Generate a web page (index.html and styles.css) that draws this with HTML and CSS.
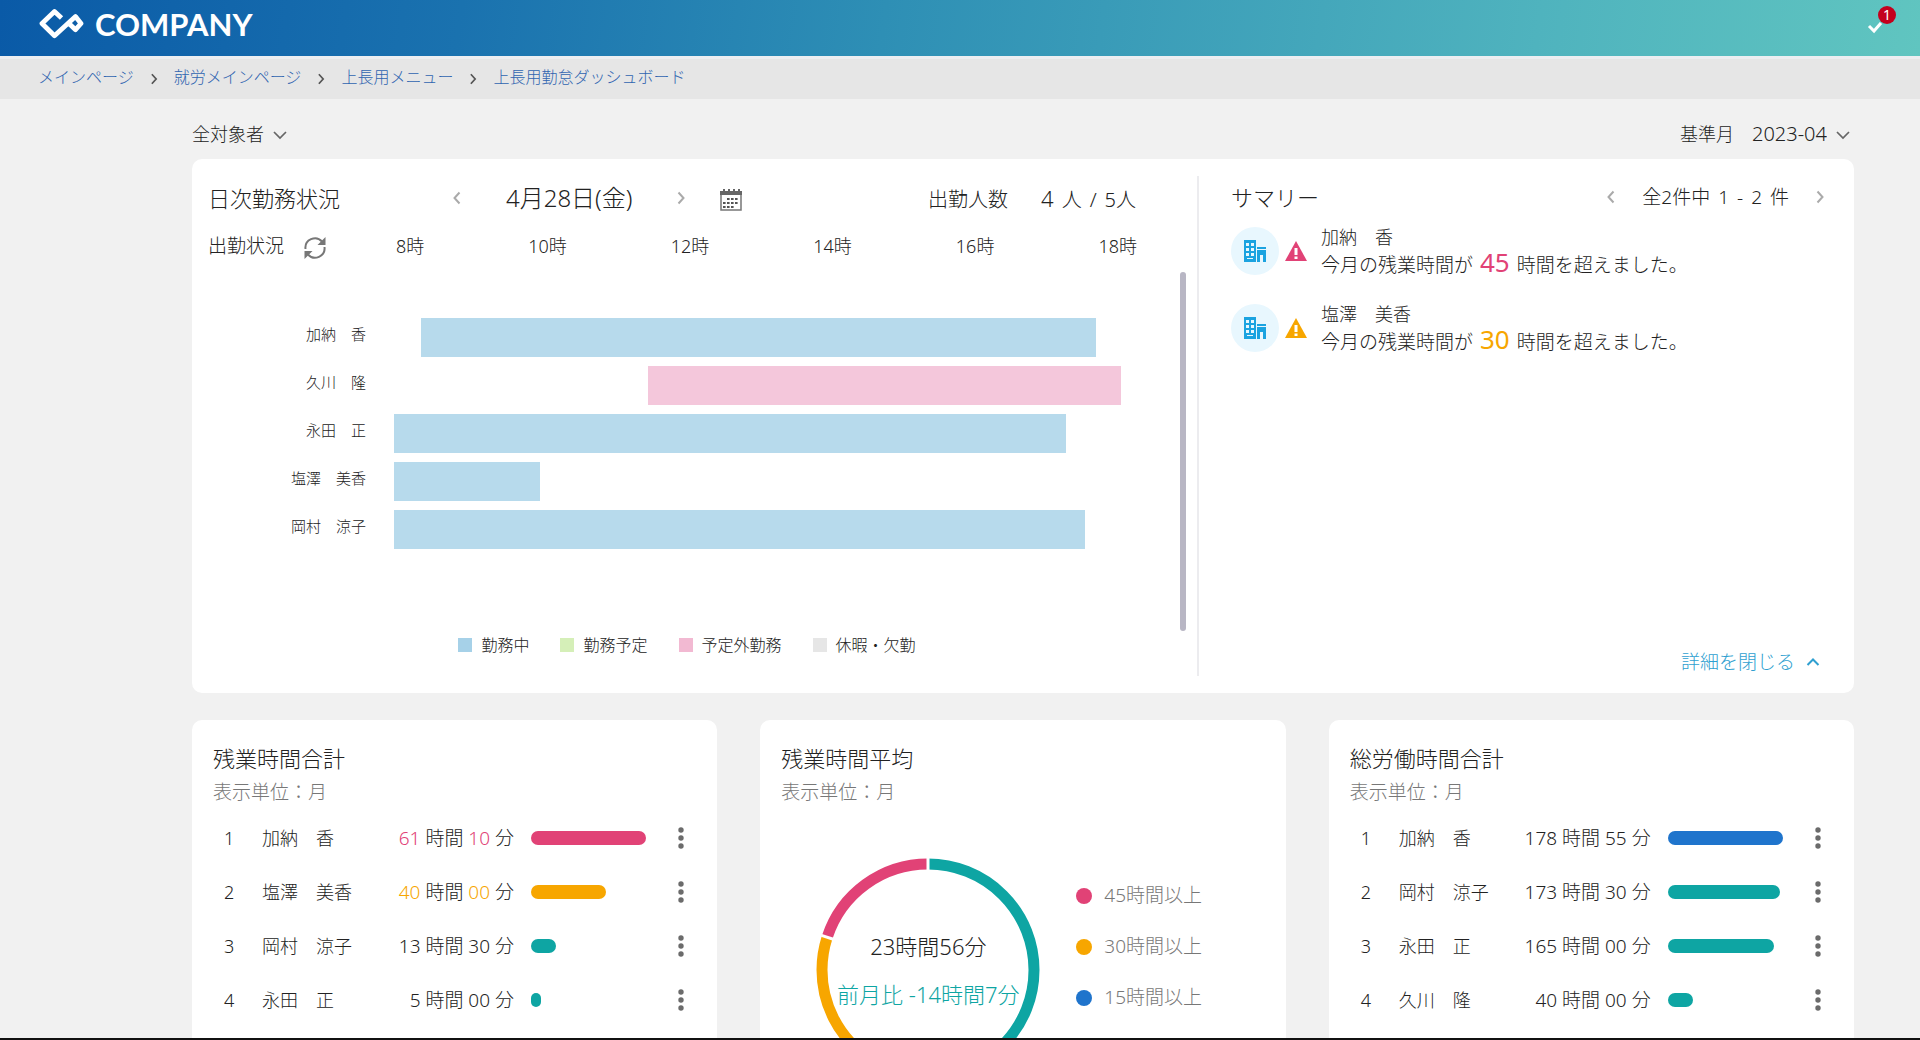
FILE: index.html
```html
<!DOCTYPE html>
<html lang="ja">
<head>
<meta charset="utf-8">
<title>上長用勤怠ダッシュボード</title>
<link rel="stylesheet" href="styles.css">
</head>
<body>
<svg width="0" height="0" class="sprite" aria-hidden="true">
  <symbol id="left" viewBox="0 0 14 14"><path d="M9.500 1.500 4.500 7l5 5.500" fill="none" stroke="currentColor" stroke-width="2"/></symbol>
  <symbol id="right" viewBox="0 0 14 14"><path d="M4.500 1.500 9.500 7l-5 5.500" fill="none" stroke="currentColor" stroke-width="2"/></symbol>
  <symbol id="down" viewBox="0 0 14 14"><path d="M1 5l6 6 6-6" fill="none" stroke="currentColor" stroke-width="1.700"/></symbol>
  <symbol id="up" viewBox="0 0 14 14"><path d="M1.500 10 7 4.500l5.500 5.500" fill="none" stroke="currentColor" stroke-width="2"/></symbol>
  <symbol id="dots" viewBox="0 0 6 24"><g fill="#6b6b6b"><circle cx="3" cy="4" r="2.700"/><circle cx="3" cy="12" r="2.700"/><circle cx="3" cy="20" r="2.700"/></g></symbol>
  <symbol id="office" viewBox="0 0 24 24"><path fill="#1ba3e0" d="M1 1h12v22H1z"/><path fill="#1ba3e0" d="M14 8h9v2h-9zM14 11h9v12h-3v-7h-3v7h-3z"/><path fill="#e8f7fe" d="M3 4h3v3H3zM8 4h3v3H8zM3 9h3v3H3zM8 9h3v3H8zM3 14h3v3H3zM8 14h3v3H8zM13 7h1v16h-1zM4 19h6v1H4z"/></symbol>
  <symbol id="warn" viewBox="0 0 22 20"><path fill="currentColor" d="M11 0 22 20H0z"/><path fill="#fff" d="M9.500 7h3v7h-3zM9.500 15.500h3V18h-3z"/></symbol>
</svg>
<div class="app">
  <header class="topbar">
    <a class="brand" href="#">
      <svg viewBox="0 0 46 34"><path d="M23.500 11 16.500 4.500 4 16.500l12.500 12.300L37.500 9.500l5.500 7-5.500 6.200-6.500-6.200" fill="none" stroke="#fff" stroke-width="4.800" stroke-linejoin="round"/></svg>
      <span>COMPANY</span>
    </a>
    <button class="task" aria-label="通知">
      <svg viewBox="0 0 16 12"><path d="M2 4l5 5 7-8" fill="none" stroke="#fff" stroke-width="3"/></svg>
      <span class="badge">1</span>
    </button>
  </header>
  <nav class="crumbs">
    <a href="#">メインページ</a><svg><use href="#right"/></svg>
    <a href="#">就労メインページ</a><svg><use href="#right"/></svg>
    <a href="#">上長用メニュー</a><svg><use href="#right"/></svg>
    <a href="#">上長用勤怠ダッシュボード</a>
  </nav>
  <main class="main">
    <div class="filters">
      <div class="picker"><select aria-label="対象者"><option>全対象者</option></select><svg><use href="#down"/></svg></div>
      <div class="picker"><label for="month">基準月</label><select id="month" class="month"><option>2023-04</option></select><svg><use href="#down"/></svg></div>
    </div>

    <section class="card overview">
      <div class="daily">
        <div class="daily-head">
          <h2>日次勤務状況</h2>
          <div class="date-nav">
            <button aria-label="前日"><svg><use href="#left"/></svg></button>
            <span>4月28日(金)</span>
            <button aria-label="翌日"><svg><use href="#right"/></svg></button>
          </div>
          <button aria-label="カレンダー"><svg class="cal" viewBox="0 0 22 22"><path d="M1 4v17h20V4" fill="none" stroke="#777" stroke-width="1.500"/><path d="M0 2h3V0h2v2h3V0h2v2h3V0h2v2h3V0h2v2h2v4H0z" fill="#666"/><path d="M7 10h12M3 14h16M3 18h12" stroke="#555" stroke-width="2.200" stroke-dasharray="2.600 1.400"/></svg></button>
          <p class="count">出勤人数<span class="spaced"><b>4</b> <span>人</span> <span>/</span> <span>5人</span></span></p>
        </div>
        <div class="daily-sub">
          <div class="state">出勤状況<button aria-label="更新"><svg class="refresh" viewBox="0 0 24 24"><g fill="none" stroke="#777" stroke-width="2"><path d="M2.500 13A9.500 9.500 0 0 1 19 5.500"/><path d="M21.500 11A9.500 9.500 0 0 1 5 18.500"/></g><path fill="#777" d="M22.500 1v8h-8zM1.500 23v-8h8z"/></svg></button></div>
          <div class="hours"><span>8時</span><span>10時</span><span>12時</span><span>14時</span><span>16時</span><span>18時</span></div>
        </div>
        <div class="chart">
          <div class="rows">
            <div class="row"><span>加納　香</span><div class="plot"><i class="on" style="margin-left:3.62%;width:90.6%"></i></div></div>
            <div class="row"><span>久川　隆</span><div class="plot"><i class="extra" style="margin-left:34.1%;width:63.5%"></i></div></div>
            <div class="row"><span>永田　正</span><div class="plot"><i class="on" style="width:90.2%"></i></div></div>
            <div class="row"><span>塩澤　美香</span><div class="plot"><i class="on" style="width:19.6%"></i></div></div>
            <div class="row"><span>岡村　涼子</span><div class="plot"><i class="on" style="width:92.7%"></i></div></div>
          </div>
          <div class="scroll"></div>
        </div>
        <ul class="legend">
          <li class="l-on">勤務中</li><li class="l-plan">勤務予定</li><li class="l-extra">予定外勤務</li><li class="l-off">休暇・欠勤</li>
        </ul>
      </div>
      <div class="summary">
        <div class="summary-head">
          <h2>サマリー</h2>
          <div class="pager">
            <button aria-label="前へ"><svg><use href="#left"/></svg></button>
            <span class="spaced"><span>全2件中</span> <span>1</span> <span>-</span> <span>2</span> <span>件</span></span>
            <button aria-label="次へ"><svg><use href="#right"/></svg></button>
          </div>
        </div>
        <ul class="alerts">
          <li class="red"><span class="avatar"><svg><use href="#office"/></svg></span><svg class="warn"><use href="#warn"/></svg>
            <div>加納　香<p>今月の残業時間が <b>45</b> 時間を超えました。</p></div></li>
          <li class="orange"><span class="avatar"><svg><use href="#office"/></svg></span><svg class="warn"><use href="#warn"/></svg>
            <div>塩澤　美香<p>今月の残業時間が <b>30</b> 時間を超えました。</p></div></li>
        </ul>
        <a class="close" href="#">詳細を閉じる<svg><use href="#up"/></svg></a>
      </div>
    </section>

    <div class="cards">
      <section class="card stat">
        <h2>残業時間合計</h2>
        <p class="unit">表示単位：月</p>
        <table>
          <tr><td class="rank">1</td><td class="name">加納　香</td><td class="time red"><b>61</b> 時間 <b>10</b> 分</td><td class="bar"><i class="red" style="width:100%"></i></td><td class="more"><button aria-label="メニュー"><svg><use href="#dots"/></svg></button></td></tr>
          <tr><td class="rank">2</td><td class="name">塩澤　美香</td><td class="time orange"><b>40</b> 時間 <b>00</b> 分</td><td class="bar"><i class="orange" style="width:65%"></i></td><td class="more"><button aria-label="メニュー"><svg><use href="#dots"/></svg></button></td></tr>
          <tr><td class="rank">3</td><td class="name">岡村　涼子</td><td class="time">13 時間 30 分</td><td class="bar"><i class="teal" style="width:22%"></i></td><td class="more"><button aria-label="メニュー"><svg><use href="#dots"/></svg></button></td></tr>
          <tr><td class="rank">4</td><td class="name">永田　正</td><td class="time">5 時間 00 分</td><td class="bar"><i class="teal" style="width:9%"></i></td><td class="more"><button aria-label="メニュー"><svg><use href="#dots"/></svg></button></td></tr>
        </table>
      </section>

      <section class="card stat">
        <h2>残業時間平均</h2>
        <p class="unit">表示単位：月</p>
        <div class="average">
          <div class="donut">
            <svg viewBox="0 0 224 224">
              <g fill="none" stroke-width="11" transform="rotate(-90 112 112)">
                <circle cx="112" cy="112" r="106" pathLength="100" stroke="#0ea5a3" stroke-dasharray="60 40"/>
                <circle cx="112" cy="112" r="106" pathLength="100" stroke="#f7a600" stroke-dasharray="20 80" stroke-dashoffset="-60"/>
                <circle cx="112" cy="112" r="106" pathLength="100" stroke="#e14276" stroke-dasharray="20 80" stroke-dashoffset="-80"/>
              </g>
              <g stroke="#fff" stroke-width="3"><path d="M112 0v14"/><path d="M112 0v14" transform="rotate(216 112 112)"/><path d="M112 0v14" transform="rotate(288 112 112)"/></g>
            </svg>
            <div class="donut-text"><span>23時間56分</span><span class="diff">前月比 -14時間7分</span></div>
          </div>
          <ul class="levels">
            <li class="red">45時間以上</li><li class="orange">30時間以上</li><li class="blue">15時間以上</li><li class="teal">15時間未満</li>
          </ul>
        </div>
      </section>

      <section class="card stat">
        <h2>総労働時間合計</h2>
        <p class="unit">表示単位：月</p>
        <table>
          <tr><td class="rank">1</td><td class="name">加納　香</td><td class="time">178 時間 55 分</td><td class="bar"><i class="blue" style="width:100%"></i></td><td class="more"><button aria-label="メニュー"><svg><use href="#dots"/></svg></button></td></tr>
          <tr><td class="rank">2</td><td class="name">岡村　涼子</td><td class="time">173 時間 30 分</td><td class="bar"><i class="teal" style="width:97%"></i></td><td class="more"><button aria-label="メニュー"><svg><use href="#dots"/></svg></button></td></tr>
          <tr><td class="rank">3</td><td class="name">永田　正</td><td class="time">165 時間 00 分</td><td class="bar"><i class="teal" style="width:92%"></i></td><td class="more"><button aria-label="メニュー"><svg><use href="#dots"/></svg></button></td></tr>
          <tr><td class="rank">4</td><td class="name">久川　隆</td><td class="time">40 時間 00 分</td><td class="bar"><i class="teal" style="width:22%"></i></td><td class="more"><button aria-label="メニュー"><svg><use href="#dots"/></svg></button></td></tr>
        </table>
      </section>
    </div>
  </main>
</div>
</body>
</html>
```
FILE: styles.css
```css
* { box-sizing: border-box; margin: 0; padding: 0; }
body {
  font: 300 18px/32px "Noto Sans", "Noto Sans CJK JP", sans-serif;
  color: #222;
  background: #f1f1f1;
}
h2 { font-size: 22px; font-weight: 300; }
b { font-weight: inherit; }
ul { list-style: none; }
a { text-decoration: none; }
button { background: none; border: 0; color: inherit; font: inherit; display: flex; cursor: pointer; }
select { appearance: none; background: none; border: 0; color: inherit; font: inherit; }
svg { display: block; flex: none; width: 14px; height: 14px; }
.sprite { position: absolute; width: 0; height: 0; }
.spaced { display: flex; align-items: baseline; gap: 8px; }

.app { display: flex; flex-direction: column; height: 100vh; border-bottom: 2px solid #111; }

.topbar {
  display: flex; justify-content: space-between; align-items: center; flex: none;
  height: 56px; padding: 0 24px 0 38px;
  background: linear-gradient(98deg, #0a5aa7 0%, #1a72af 24%, #2e8fb5 46%, #4fb3be 80%, #60c5c0 100%);
}
.brand { display: flex; align-items: center; gap: 11px; padding-bottom: 8px; color: #fff; font: 700 31px/34px Lato, sans-serif; }
.brand svg { width: 46px; height: 34px; }
.task { position: relative; width: 29px; height: 40px; align-items: center; }
.task svg { width: 16px; height: 12px; }
.badge {
  position: absolute; top: -2px; right: 0; width: 18px; height: 18px;
  border-radius: 9px; background: #c4001d; color: #fff; font-size: 14px; font-weight: 400; line-height: 18px; text-align: center;
}

.crumbs {
  display: flex; align-items: center; gap: 13px; flex: none;
  height: 43px; padding: 0 38px 4px; border-top: 3px solid #eceef1;
  background: #e6e6e6; font-size: 16px; color: #555;
}
.crumbs a { color: #2f64b0; }
.crumbs svg { width: 14px; height: 12px; margin-top: 3px; }

.main { flex: 1; min-height: 0; overflow-y: auto; scrollbar-width: none; padding: 0 66px 27px 192px; }
.filters { display: flex; justify-content: space-between; padding: 19px 4px 9px 0; }
.picker { display: flex; align-items: center; gap: 9px; }
.picker label { margin-right: 9px; }
.picker svg { color: #666; }
.picker .month { font-size: 20px; }

.card { background: #fff; border-radius: 10px; }
.overview { display: grid; grid-template-columns: 1005fr 657fr; }

.daily { padding: 23px 11px 38px 16px; }
.daily-head { display: flex; align-items: center; height: 32px; padding-right: 50px; }
.daily-head h2 { width: 242px; }
.daily button, .pager button { color: #aaa; }
.date-nav { display: flex; align-items: center; gap: 42px; margin-right: 32px; font-size: 24px; }
.cal { width: 22px; height: 22px; margin-top: 4px; }
.count { display: flex; align-items: baseline; gap: 33px; margin-left: auto; padding-top: 2px; font-size: 20px; }
.count b { font-size: 22px; }
.daily-sub { display: flex; justify-content: space-between; height: 32px; margin-top: 16px; padding-right: 49px; font-size: 19px; }
.state { display: flex; align-items: center; gap: 19px; width: 188px; }
.state svg { margin-top: 4px; }
.refresh { width: 24px; height: 24px; }
.hours { display: flex; flex: 1; justify-content: space-between; font-size: 18px; }

.chart { display: flex; gap: 41px; margin-top: 10px; }
.rows { display: grid; flex: 1; gap: 9px; padding: 46px 0 82px; }
.row { display: flex; align-items: center; gap: 28px; height: 39px; }
.row span { width: 158px; font-size: 15px; text-align: right; padding-bottom: 8px; }
.plot { flex: 1; }
.plot i { display: block; height: 39px; }
.on { background: #b7daec; }
.extra { background: #f4c7db; }
.scroll { width: 6px; border-radius: 3px; background: #b8b6c4; }

.legend { display: flex; justify-content: center; gap: 31px; margin: 4px 0 0 40px; padding-right: 60px; font-size: 16px; line-height: 20px; }
.legend li { display: flex; align-items: center; gap: 9px; }
.legend li::before { content: ""; width: 14px; height: 14px; background: var(--c); }
.l-on { --c: #a6d1e8; }
.l-plan { --c: #d5efb8; }
.l-extra { --c: #f2b9d2; }
.l-off { --c: #e6e6e6; }

.summary { display: flex; flex-direction: column; margin: 17px 0; padding: 5px 27px 0 32px; border-left: 2px solid #ececef; }
.summary-head, .pager, .alerts li { display: flex; align-items: center; }
.summary-head { justify-content: space-between; height: 32px; }
.pager { gap: 24px; font-size: 19px; }
.alerts { display: grid; gap: 21px; margin-top: 10px; }
.alerts li { height: 56px; line-height: 28px; }
.alerts p { font-size: 19px; }
.alerts b { margin: 0 2px; font-size: 26px; font-weight: 400; line-height: 20px; color: var(--c); }
.avatar { display: grid; place-items: center; width: 48px; height: 48px; margin-right: 6px; border-radius: 50%; background: #e8f7fe; }
.avatar svg { width: 24px; height: 24px; }
.warn { width: 22px; height: 20px; margin-right: 14px; color: var(--c); }
.close { display: flex; align-items: center; gap: 11px; align-self: flex-end; margin: auto 7px 0 0; font-size: 19px; line-height: 28px; color: #2f9fd0; }

.red { --c: #e14276; }
.orange { --c: #f7a600; }
.teal { --c: #0ea5a3; }
.blue { --c: #1f74cc; }

.cards { display: grid; grid-template-columns: repeat(3, 1fr); gap: 43px; margin-top: 27px; }
.stat { padding: 22px 21px 32px; }
.unit { margin-top: 2px; color: #777; font-size: 19px; }
table { width: 100%; margin-top: 3px; border-collapse: collapse; table-layout: fixed; }
td { height: 54px; }
.rank { width: 49px; padding-left: 11px; }
.name { width: 120px; }
.time { width: 132px; font-size: 19px; text-align: right; white-space: nowrap; }
.time b { color: var(--c); }
.bar { padding: 0 20px 0 17px; }
.bar i { display: block; height: 14px; border-radius: 7px; background: var(--c); }
.more { width: 30px; }
.more button { margin: 0 auto; }
.more svg { width: 6px; height: 24px; }

.average { display: flex; gap: 36px; margin-top: 50px; padding-left: 35px; }
.donut { position: relative; width: 224px; }
.donut svg { width: 224px; height: 224px; }
.donut-text { position: absolute; inset: 0; display: flex; flex-direction: column; justify-content: center; text-align: center; font-size: 22px; line-height: 48px; white-space: nowrap; }
.diff { color: #0ea5a3; }
.levels { padding-top: 12px; font-size: 19px; line-height: 51px; color: #777; }
.levels li { display: flex; align-items: center; gap: 12px; }
.levels li::before { content: ""; width: 16px; height: 16px; border-radius: 50%; background: var(--c); }
```
